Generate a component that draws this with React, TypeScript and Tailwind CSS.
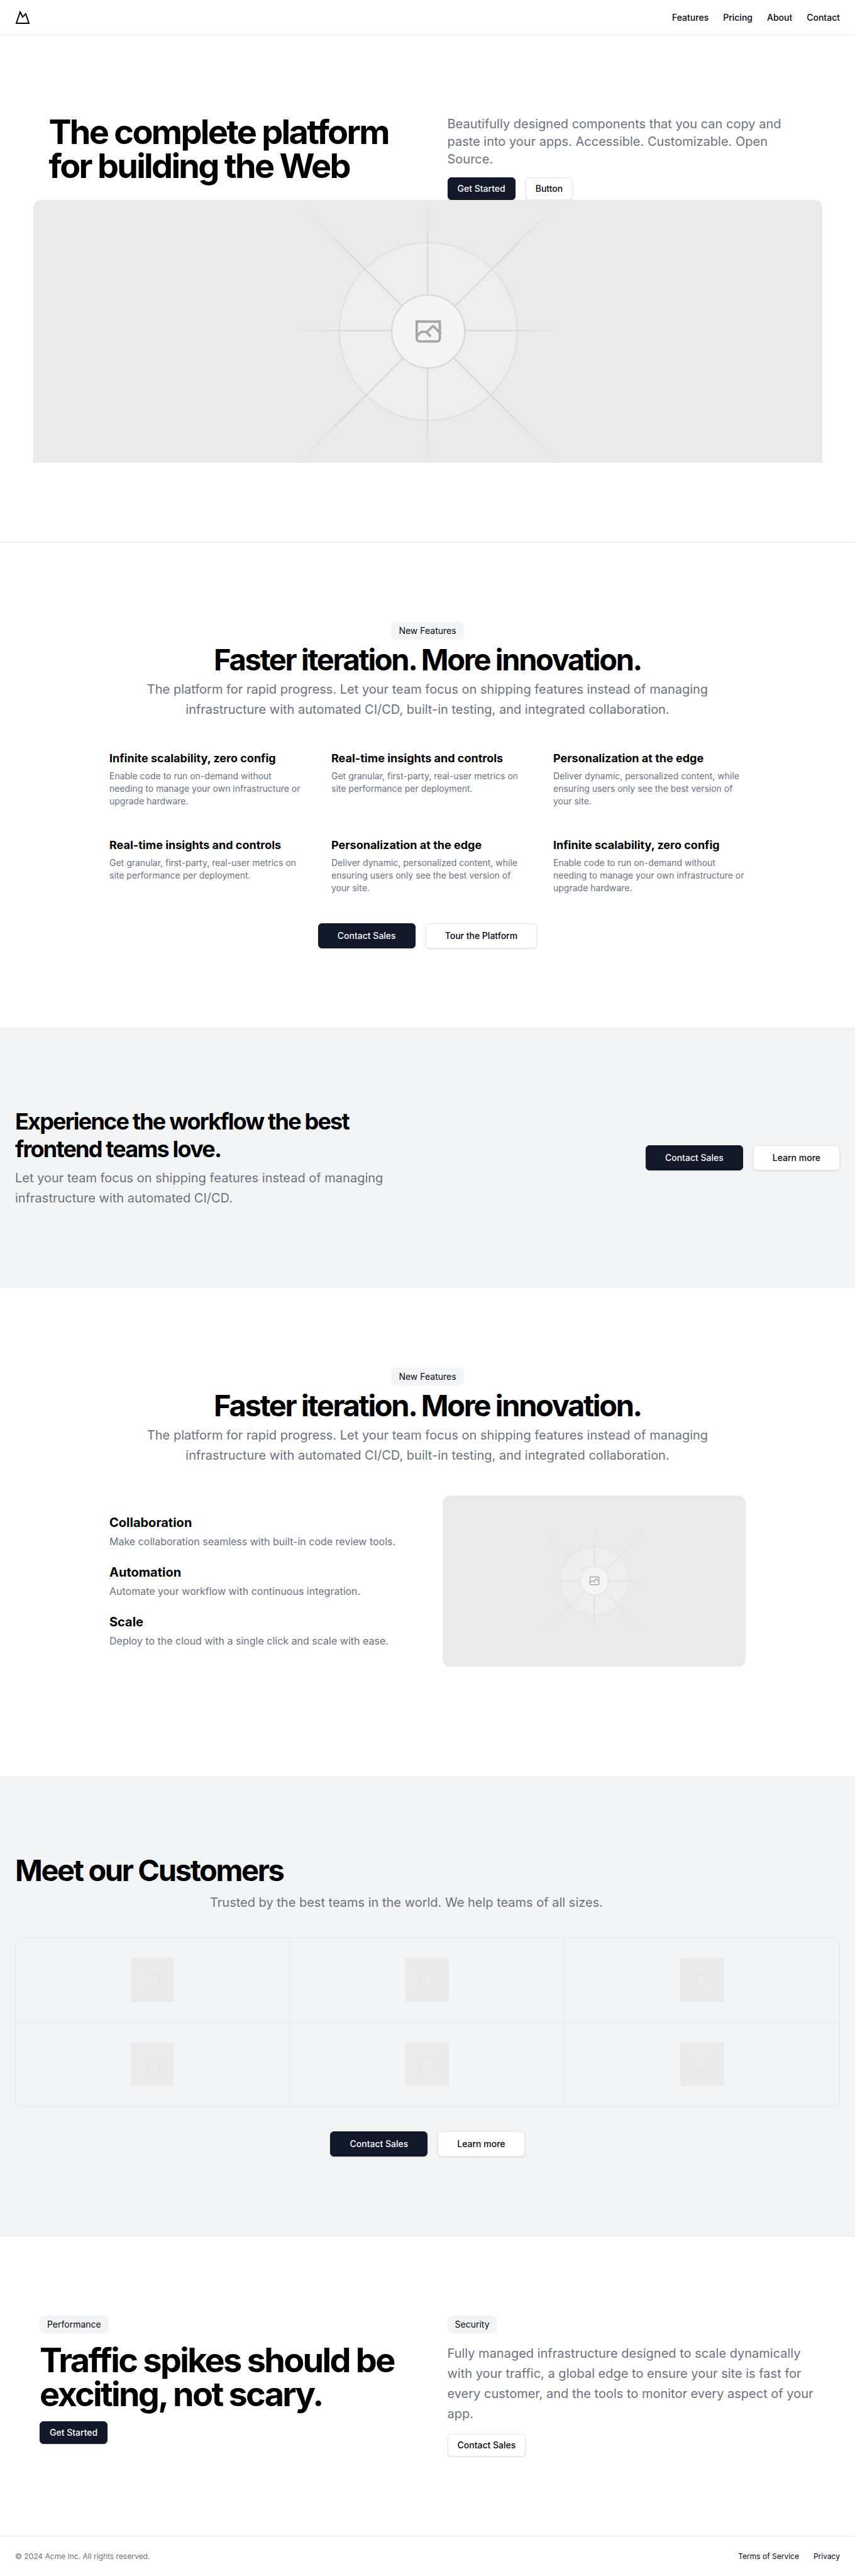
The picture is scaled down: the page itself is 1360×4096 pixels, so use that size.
import React from "react";

const fontStack = "font-['Inter','Liberation_Sans',sans-serif]";

function MountainIcon() {
  return (
    <svg
      viewBox="0 0 24 24"
      className="size-6"
      fill="none"
      stroke="currentColor"
      strokeWidth="2"
      aria-hidden="true"
    >
      <path d="m8 3 4 8 5-5 5 15H2L8 3z" />
    </svg>
  );
}

function Stops() {
  return (
    <>
      <stop stopColor="#C9C9C9" stopOpacity="0" />
      <stop offset=".208" stopColor="#C9C9C9" />
      <stop offset=".792" stopColor="#C9C9C9" />
      <stop offset="1" stopColor="#C9C9C9" stopOpacity="0" />
    </>
  );
}

function Placeholder({ id, label, className }: { id: string; label: string; className: string }) {
  return (
    <svg
      viewBox="0 0 1200 1200"
      preserveAspectRatio="xMidYMid slice"
      className={className}
      fill="none"
      role="img"
      aria-label={label}
    >
      <defs>
        <linearGradient id={id + "-rising"} x1="406" y1="796.6" x2="797.4" y2="405.2" gradientUnits="userSpaceOnUse">
          <Stops />
        </linearGradient>
        <linearGradient id={id + "-level"} x1="404.8" y1="598.7" x2="796.6" y2="598.7" gradientUnits="userSpaceOnUse">
          <Stops />
        </linearGradient>
        <linearGradient id={id + "-upright"} x1="599.5" y1="795.7" x2="599.5" y2="404" gradientUnits="userSpaceOnUse">
          <Stops />
        </linearGradient>
        <linearGradient id={id + "-falling"} x1="795.7" y1="796.6" x2="404.3" y2="405.2" gradientUnits="userSpaceOnUse">
          <Stops />
        </linearGradient>
      </defs>
      <rect width="1200" height="1200" fill="#EAEAEA" />
      <g opacity=".5" strokeWidth="2.418">
        <g opacity=".5">
          <circle cx="600.7" cy="599.9" r="136.6" fill="#FAFAFA" />
          <circle cx="600.7" cy="599.9" r="135.4" stroke="#C9C9C9" />
        </g>
        <path stroke={`url(#${id}-rising)`} d="M406 796.6 797.4 405.2" />
        <path stroke={`url(#${id}-level)`} d="M404.8 598.7h391.8" />
        <path stroke={`url(#${id}-upright)`} d="M599.5 795.7V404" />
        <path stroke={`url(#${id}-falling)`} d="M795.7 796.6 404.3 405.2" />
        <circle cx="600.7" cy="599.9" r="56.8" fill="#fff" />
        <path
          fill="#666"
          fillRule="evenodd"
          clipRule="evenodd"
          d="M616.426 586.58h-31.434v16.176l3.553-3.554.531-.531h9.068l.074-.074 8.463-8.463h2.565l7.18 7.181V586.58Zm-15.715 14.654 3.698 3.699 1.283 1.282-2.565 2.565-1.282-1.283-5.2-5.199h-6.066l-5.514 5.514-.073.073v2.876a2.418 2.418 0 0 0 2.418 2.418h26.598a2.418 2.418 0 0 0 2.418-2.418v-8.317l-8.463-8.463-7.181 7.181-.071.072Zm-19.347 5.442v4.085a6.045 6.045 0 0 0 6.046 6.045h26.598a6.044 6.044 0 0 0 6.045-6.045v-7.108l1.356-1.355-1.282-1.283-.074-.073v-17.989h-38.689v23.43l-.146.146.146.147Z"
        />
        <circle cx="600.7" cy="599.9" r="55.6" stroke="#C9C9C9" />
      </g>
    </svg>
  );
}

function Button({
  children,
  outline = false,
  large = false,
}: {
  children: React.ReactNode;
  outline?: boolean;
  large?: boolean;
}) {
  const size = large ? "h-10 px-[30px]" : "h-9 px-[15px]";
  const look = outline
    ? "border-gray-200 bg-white text-gray-950"
    : "border-[#111827] bg-[#111827] text-gray-50";
  return (
    <button
      type="button"
      className={`inline-flex items-center justify-center rounded-md border text-sm font-medium whitespace-nowrap shadow-sm ${size} ${look}`}
    >
      {children}
    </button>
  );
}

function Badge({ children }: { children: React.ReactNode }) {
  return <div className="inline-block rounded-lg bg-gray-100 px-3 py-1 text-sm">{children}</div>;
}

function SectionHeader() {
  return (
    <div className="flex flex-col items-center gap-2 text-center">
      <Badge>New Features</Badge>
      <h2 className="text-[47px] leading-[47px] font-bold tracking-tighter text-black">
        Faster iteration. More innovation.
      </h2>
      <p className="max-w-[900px] text-[20px] leading-[32px] text-[#6b7280]">
        The platform for rapid progress. Let your team focus on shipping features instead of managing infrastructure
        with automated CI/CD, built-in testing, and integrated collaboration.
      </p>
    </div>
  );
}

const scalability = {
  title: "Infinite scalability, zero config",
  text: "Enable code to run on-demand without needing to manage your own infrastructure or upgrade hardware.",
};
const insights = {
  title: "Real-time insights and controls",
  text: "Get granular, first-party, real-user metrics on site performance per deployment.",
};
const edge = {
  title: "Personalization at the edge",
  text: "Deliver dynamic, personalized content, while ensuring users only see the best version of your site.",
};
const features = [scalability, insights, edge, insights, edge, scalability];

const workflow = [
  { title: "Collaboration", text: "Make collaboration seamless with built-in code review tools." },
  { title: "Automation", text: "Automate your workflow with continuous integration." },
  { title: "Scale", text: "Deploy to the cloud with a single click and scale with ease." },
];

const customerRows = [
  ["one", "two", "three"],
  ["four", "five", "six"],
];

export default function App() {
  return (
    <div className={`${fontStack} flex min-h-screen flex-col bg-white text-gray-950`}>
      <header className="flex h-14 items-center justify-between border-b border-gray-200 px-6">
        <a href="#" aria-label="Acme Inc" className="text-black">
          <MountainIcon />
        </a>
        <nav className="flex gap-[23px] text-sm font-medium">
          <a href="#features">Features</a>
          <a href="#pricing">Pricing</a>
          <a href="#about">About</a>
          <a href="#contact">Contact</a>
        </nav>
      </header>

      <main className="flex-1">
        <section className="border-b border-gray-200 pt-[127px] pb-[126px]">
          <div className="mx-auto grid max-w-[1285px] grid-cols-2 gap-[63px] px-10">
            <h1 className="text-[54px] leading-[54px] font-bold tracking-tighter text-black">
              The complete platform for building the Web
            </h1>
            <div className="flex flex-col gap-[15px]">
              <p className="max-w-[550px] text-[20px] leading-[28px] text-[#6b7280]">
                Beautifully designed components that you can copy and paste into your apps. Accessible. Customizable.
                Open Source.
              </p>
              <div className="flex gap-4">
                <Button>Get Started</Button>
                <Button outline>Button</Button>
              </div>
            </div>
          </div>
          <Placeholder
            id="hero"
            label="Hero"
            className="mx-auto block aspect-[3/1] w-full max-w-[1255px] rounded-t-xl"
          />
        </section>

        <section id="features" className="py-[126px]">
          <SectionHeader />
          <div className="mx-auto grid max-w-[1012px] grid-cols-3 gap-x-[47px] gap-y-[46px] pt-12 pb-[46px]">
            {features.map((f, i) => (
              <div key={i} className="flex flex-col gap-1">
                <h3 className="text-lg leading-[28px] font-bold text-black">{f.title}</h3>
                <p className="text-sm leading-[20px] text-[#6b7280]">{f.text}</p>
              </div>
            ))}
          </div>
          <div className="flex justify-center gap-4">
            <Button large>Contact Sales</Button>
            <Button large outline>
              Tour the Platform
            </Button>
          </div>
        </section>

        <section className="flex items-center justify-between bg-gray-100 px-6 py-[127px]">
          <div className="flex max-w-[600px] flex-col gap-2">
            <h2 className="text-[36px] leading-[44px] font-bold tracking-tighter text-black">
              Experience the workflow the best frontend teams love.
            </h2>
            <p className="text-[20px] leading-[32px] text-[#6b7280]">
              Let your team focus on shipping features instead of managing infrastructure with automated CI/CD.
            </p>
          </div>
          <div className="flex gap-4">
            <Button large>Contact Sales</Button>
            <Button large outline>
              Learn more
            </Button>
          </div>
        </section>

        <section className="py-[127px]">
          <SectionHeader />
          <div className="mx-auto grid max-w-[1012px] grid-cols-2 items-center gap-[47px] pt-12 pb-[47px]">
            <ul className="flex flex-col gap-[23px]">
              {workflow.map((w) => (
                <li key={w.title} className="flex flex-col gap-1">
                  <h3 className="text-[20px] leading-[28px] font-bold text-black">{w.title}</h3>
                  <p className="text-base leading-[24px] text-[#6b7280]">{w.text}</p>
                </li>
              ))}
            </ul>
            <Placeholder id="workflow" label="Workflow" className="block aspect-video w-full rounded-xl" />
          </div>
        </section>

        <section className="border-b border-gray-200 bg-gray-100 px-6 py-[126px]">
          <h2 className="text-[47px] leading-[47px] font-bold tracking-tighter text-black">Meet our Customers</h2>
          <p className="mx-auto mt-3 max-w-[692px] text-[20px] leading-[32px] text-[#6b7280]">
            Trusted by the best teams in the world. We help teams of all sizes.
          </p>
          <div className="mt-10 divide-y divide-gray-200 rounded-lg border border-gray-200">
            {customerRows.map((row, r) => (
              <div key={r} className="grid grid-cols-3 divide-x divide-gray-200">
                {row.map((name) => (
                  <div key={name} className="flex items-center justify-center p-8">
                    <Placeholder id={`logo-${name}`} label="Customer logo" className="block size-[69px]" />
                  </div>
                ))}
              </div>
            ))}
          </div>
          <div className="mt-[39px] flex justify-center gap-4">
            <Button large>Contact Sales</Button>
            <Button large outline>
              Learn more
            </Button>
          </div>
        </section>

        <section className="grid grid-cols-2 gap-[63px] px-[63px] py-[126px]">
          <div className="flex flex-col items-start gap-4">
            <Badge>Performance</Badge>
            <h2 className="text-[54px] leading-[54px] font-bold tracking-tighter text-black">
              Traffic spikes should be exciting, not scary.
            </h2>
            <Button>Get Started</Button>
          </div>
          <div className="flex flex-col items-start gap-4">
            <Badge>Security</Badge>
            <p className="text-[20px] leading-[32px] text-[#6b7280]">
              Fully managed infrastructure designed to scale dynamically with your traffic, a global edge to ensure
              your site is fast for every customer, and the tools to monitor every aspect of your app.
            </p>
            <Button outline>Contact Sales</Button>
          </div>
        </section>
      </main>

      <footer className="flex h-16 items-center justify-between border-t border-gray-200 px-6 text-xs">
        <p className="text-[#6b7280]">© 2024 Acme Inc. All rights reserved.</p>
        <nav className="flex gap-[23px]">
          <a href="#terms">Terms of Service</a>
          <a href="#privacy">Privacy</a>
        </nav>
      </footer>
    </div>
  );
}
